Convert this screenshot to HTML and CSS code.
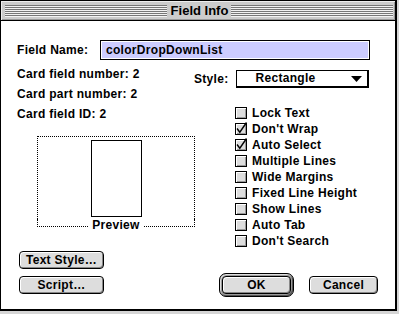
FILE: index.html
```html
<!DOCTYPE html>
<html lang="en">
<head>
  <meta charset="UTF-8" />
  <title>Field Info</title>
  <link rel="stylesheet" href="styles.css">
</head>
<body>
  <div class="window">
    <div class="titlebar">
      <span class="stripes"></span>
      <span class="title">Field Info</span>
      <span class="stripes"></span>
    </div>

    <div class="content">
      <div class="name-row">
        <label class="name-label">Field Name:</label>
        <div class="name-input"><span class="selection">colorDropDownList</span></div>
      </div>

      <div class="main">
        <div class="left">
          <div class="info">
            <p>Card field number: 2</p>
            <p>Card part number: 2</p>
            <p>Card field ID: 2</p>
          </div>
          <div class="preview">
            <div class="preview-frame">
              <div class="preview-card"></div>
            </div>
            <div class="preview-label">Preview</div>
          </div>
        </div>

        <div class="right">
          <div class="style-row">
            <span class="style-label">Style:</span>
            <div class="popup">
              <span>Rectangle</span>
              <svg width="11" height="6" viewBox="0 0 11 6"><polygon points="0,0 11,0 5.5,6" fill="#000"/></svg>
            </div>
          </div>
          <ul class="options">
            <li><span class="box"></span>Lock Text</li>
            <li><span class="box"><svg width="10" height="10" viewBox="0 0 10 10"><path d="M1 4.5 L3.8 8.2 L10.5 -1.5" fill="none" stroke="#000" stroke-width="1.4"/></svg></span>Don't Wrap</li>
            <li><span class="box"><svg width="10" height="10" viewBox="0 0 10 10"><path d="M1 4.5 L3.8 8.2 L10.5 -1.5" fill="none" stroke="#000" stroke-width="1.4"/></svg></span>Auto Select</li>
            <li><span class="box"></span>Multiple Lines</li>
            <li><span class="box"></span>Wide Margins</li>
            <li><span class="box"></span>Fixed Line Height</li>
            <li><span class="box"></span>Show Lines</li>
            <li><span class="box"></span>Auto Tab</li>
            <li><span class="box"></span>Don't Search</li>
          </ul>
        </div>
      </div>

      <div class="footer">
        <button class="btn btn-textstyle">Text Style…</button>
        <button class="btn btn-script">Script…</button>
        <div class="default-ring"><button class="btn btn-ok">OK</button></div>
        <button class="btn btn-cancel">Cancel</button>
      </div>
    </div>
  </div>
</body>
</html>
```

FILE: styles.css
```css
* {
  box-sizing: border-box;
}

body {
  margin: 0;
  background: #d6d6d6;
  font-family: "Liberation Sans", Arial, sans-serif;
  font-size: 12px;
  font-weight: bold;
  letter-spacing: 0.3px;
  color: #000;
}

.window {
  width: 397px;
  height: 311px;
  border: 1px solid #000;
  border-right-width: 2px;
  border-bottom-width: 2px;
  background: #fff;
  display: flex;
  flex-direction: column;
}

/* title bar */

.titlebar {
  height: 20px;
  flex: none;
  display: flex;
  align-items: center;
  padding: 0 2px 0 4px;
  background: #cccccc;
  border-bottom: 1px solid #000;
  box-shadow: inset 1px 1px 0 #eee, inset -1px -1px 0 #999;
}

.stripes {
  flex: 1;
  height: 12px;
  background: repeating-linear-gradient(to bottom, #777 0 1px, #f2f2f2 1px 2px);
}

.title {
  padding: 0 3px 0 4px;
  font-size: 13px;
  letter-spacing: 0;
  line-height: 19px;
}

/* content */

.content {
  flex: 1;
  padding: 19px 17px 0 16px;
}

.name-row {
  display: flex;
  align-items: center;
  height: 20px;
}

.name-label {
  width: 83px;
}

.name-input {
  width: 270px;
  height: 20px;
  border: 1px solid #000;
  padding: 1px;
}

.selection {
  display: block;
  height: 16px;
  line-height: 16px;
  padding-left: 4px;
  background: #ccccff;
}

.main {
  display: grid;
  grid-template-columns: 179px 1fr;
  height: 189px;
}

.info {
  margin-top: 4px;
}

.info p {
  margin: 0;
  line-height: 20px;
}

.preview {
  margin: 12px 0 0 20px;
  width: 158px;
}

.preview-frame {
  height: 83px;
  border: 1px dotted #000;
  border-bottom: none;
  padding-top: 3px;
  display: flex;
  justify-content: center;
}

.preview-card {
  width: 51px;
  height: 77px;
  border: 1px solid #000;
}

.preview-label {
  display: flex;
  align-items: flex-start;
  height: 13px;
  line-height: 13px;
}

.preview-label::before,
.preview-label::after {
  content: "";
  flex: 1;
  height: 7px;
  border-bottom: 1px dotted #000;
}

.preview-label::before {
  border-left: 1px dotted #000;
  margin-right: 4px;
}

.preview-label::after {
  border-right: 1px dotted #000;
  margin-left: 4px;
}

/* right column */

.style-row {
  display: flex;
  align-items: center;
  margin-top: 10px;
  margin-left: -2px;
  gap: 6px;
}

.popup {
  width: 133px;
  height: 18px;
  margin-left: 2px;
  border: 1px solid #000;
  border-right-width: 2px;
  border-bottom-width: 2px;
  display: flex;
  align-items: center;
  justify-content: space-between;
  padding: 0 5px 0 18px;
  line-height: 15px;
}

.popup svg {
  display: block;
}

.options {
  list-style: none;
  margin: 17px 0 0;
  padding: 0 0 0 39px;
}

.options li {
  display: flex;
  align-items: center;
  gap: 5px;
  height: 16px;
}

.box {
  width: 12px;
  height: 12px;
  flex: none;
  border: 1px solid #000;
  background: #dddddd;
  box-shadow: inset 1px 1px 0 #fff, inset -1px -1px 0 #999;
}

.box svg {
  display: block;
  overflow: visible;
}

/* buttons */

.footer {
  margin-top: 2px;
  padding-left: 2px;
  display: grid;
  grid-template-columns: 85px 1fr 75px 69px;
  grid-template-rows: 18px 24px;
  grid-template-areas:
    "textstyle . . ."
    "script . ok cancel";
  column-gap: 15px;
  row-gap: 4px;
  align-items: center;
}

.btn {
  height: 18px;
  padding: 0;
  border: 1px solid #000;
  border-radius: 4px;
  background: #dddddd;
  box-shadow: inset 1px 1px 0 #fff, inset -1px -1px 0 #888;
  font-family: inherit;
  font-size: 12px;
  font-weight: bold;
  letter-spacing: 0.3px;
  color: #000;
  line-height: 15px;
}

.btn-textstyle {
  grid-area: textstyle;
}

.btn-script {
  grid-area: script;
}

.btn-cancel {
  grid-area: cancel;
}

.default-ring {
  grid-area: ok;
  height: 24px;
  border: 1px solid #000;
  border-radius: 7px;
  padding: 2px;
  background: #9a9a9a;
  box-shadow: inset 1px 1px 0 #ddd, inset -1px -1px 0 #555;
}

.btn-ok {
  display: block;
  width: 100%;
}
```
